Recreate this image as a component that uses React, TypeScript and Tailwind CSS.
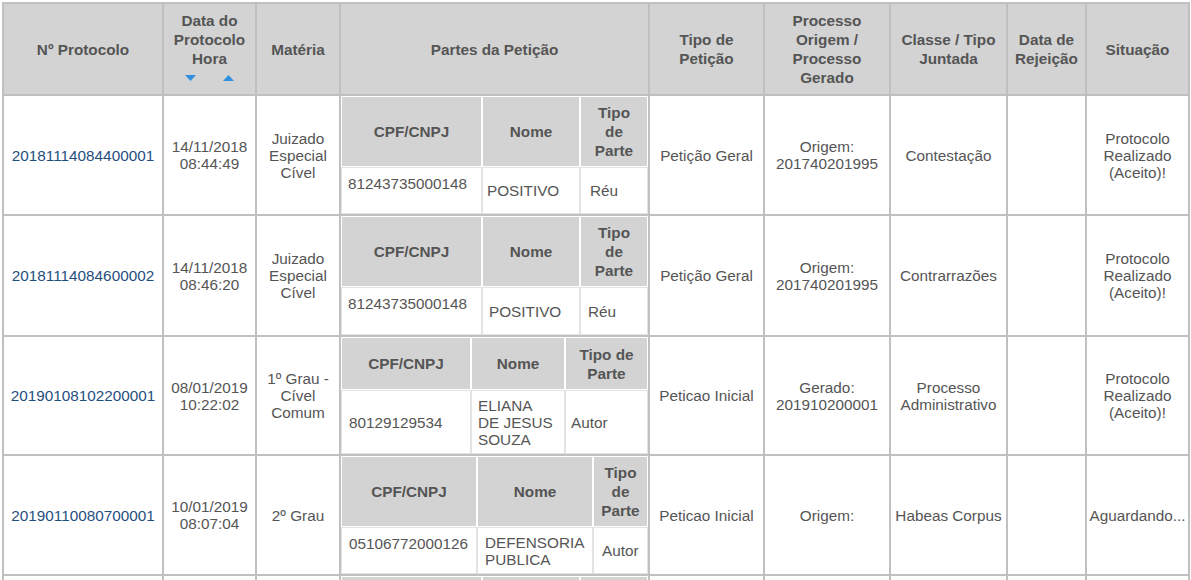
import React from "react";

const CELL =
  "flex items-center justify-center text-center border-r-2 border-b-2 border-[#c0c0c0] whitespace-nowrap";
const HEAD = CELL + " bg-[#d3d3d3] font-bold leading-[19px] text-[#555555]";
const BODY = CELL + " bg-white leading-[17px] text-[#555555]";

const NTH =
  "flex items-center justify-center text-center font-bold leading-[19px] bg-[#d3d3d3] border border-white text-[#555555] whitespace-nowrap";
const NTD =
  "flex bg-white border border-[#e3e3e3] leading-[17px] text-[#555555] whitespace-nowrap";

function Lines({ lines }: { lines: string[] }) {
  return (
    <div>
      {lines.map((l, i) => (
        <div key={i}>{l === "" ? "\u00a0" : l}</div>
      ))}
    </div>
  );
}

type Nested = {
  grid: string;
  tipoHead: string[];
  heads?: boolean;
  cpf?: string;
  cpfTop?: boolean;
  nome?: string[];
  tipo?: string;
  pads?: [string, string, string];
};

type Row = {
  proto: string;
  date: string[];
  materia: string[];
  nested: Nested;
  tipoPet: string[];
  proc: string[];
  classe: string[];
  sit: string[];
};

const rows: Row[] = [
  {
    proto: "20181114084400001",
    date: ["14/11/2018", "08:44:49"],
    materia: ["Juizado", "Especial", "Cível"],
    nested: {
      grid: "grid-cols-[141px_98px_68px] grid-rows-[71px_47px]",
      tipoHead: ["Tipo", "de", "Parte"],
      cpf: "81243735000148",
      cpfTop: true,
      nome: ["POSITIVO"],
      tipo: "Réu",
      pads: ["pl-[6px]", "pl-[4px]", "pl-[9px]"],
    },
    tipoPet: ["Petição Geral"],
    proc: ["Origem:", "201740201995"],
    classe: ["Contestação"],
    sit: ["Protocolo", "Realizado", "(Aceito)!"],
  },
  {
    proto: "20181114084600002",
    date: ["14/11/2018", "08:46:20"],
    materia: ["Juizado", "Especial", "Cível"],
    nested: {
      grid: "grid-cols-[141px_98px_68px] grid-rows-[71px_48px]",
      tipoHead: ["Tipo", "de", "Parte"],
      cpf: "81243735000148",
      cpfTop: true,
      nome: ["POSITIVO"],
      tipo: "Réu",
      pads: ["pl-[6px]", "pl-[6px]", "pl-[7px]"],
    },
    tipoPet: ["Petição Geral"],
    proc: ["Origem:", "201740201995"],
    classe: ["Contrarrazões"],
    sit: ["Protocolo", "Realizado", "(Aceito)!"],
  },
  {
    proto: "20190108102200001",
    date: ["08/01/2019", "10:22:02"],
    materia: ["1º Grau -", "Cível", "Comum"],
    nested: {
      grid: "grid-cols-[130px_94px_83px] grid-rows-[53px_64px]",
      tipoHead: ["Tipo de", "Parte"],
      cpf: "80129129534",
      cpfTop: false,
      nome: ["ELIANA", "DE JESUS", "SOUZA"],
      tipo: "Autor",
      pads: ["pl-[7px]", "pl-[6px]", "pl-[5px]"],
    },
    tipoPet: ["Peticao Inicial"],
    proc: ["Gerado:", "201910200001"],
    classe: ["Processo", "Administrativo"],
    sit: ["Protocolo", "Realizado", "(Aceito)!"],
  },
  {
    proto: "20190110080700001",
    date: ["10/01/2019", "08:07:04"],
    materia: ["2º Grau"],
    nested: {
      grid: "grid-cols-[136px_116px_55px] grid-rows-[71px_47px]",
      tipoHead: ["Tipo", "de", "Parte"],
      cpf: "05106772000126",
      cpfTop: true,
      nome: ["DEFENSORIA", "PUBLICA"],
      tipo: "Autor",
      pads: ["pl-[7px]", "pl-[7px]", "pl-[8px]"],
    },
    tipoPet: ["Peticao Inicial"],
    proc: ["Origem:"],
    classe: ["Habeas Corpus"],
    sit: ["Aguardando..."],
  },
];

function Partes({ n }: { n: Nested }) {
  const pads = n.pads ?? ["pl-[6px]", "pl-[6px]", "pl-[6px]"];
  const showHeads = n.heads !== false;
  return (
    <div className={"grid h-full " + n.grid}>
      <div className={NTH}>{showHeads ? "CPF/CNPJ" : ""}</div>
      <div className={NTH}>{showHeads ? "Nome" : ""}</div>
      <div className={NTH}>{showHeads ? <Lines lines={n.tipoHead} /> : null}</div>
      <div
        className={
          NTD +
          " " +
          pads[0] +
          (n.cpfTop ? " items-start pt-[7px]" : " items-center")
        }
      >
        {n.cpf ?? ""}
      </div>
      <div className={NTD + " items-center " + pads[1]}>
        {n.nome ? <Lines lines={n.nome} /> : null}
      </div>
      <div className={NTD + " items-center " + pads[2]}>{n.tipo ?? ""}</div>
    </div>
  );
}

function SortArrows() {
  return (
    <div className="flex items-center justify-center gap-[27px] h-[19px]">
      <svg width="11" height="6" viewBox="0 0 11 6">
        <polygon points="0,0 11,0 5.5,6" fill="#2f8fe0" />
      </svg>
      <svg width="11" height="6" viewBox="0 0 11 6">
        <polygon points="0,6 11,6 5.5,0" fill="#2f8fe0" />
      </svg>
    </div>
  );
}

export default function App() {
  return (
    <div className="w-[1191px] h-[580px] overflow-hidden bg-white pt-[2px] pl-[2px] font-['Liberation_Sans',Arial,Helvetica,sans-serif] text-[15.3px]">
      <div className="grid grid-cols-[160px_93px_84px_309px_115px_126px_117px_79px_103px] grid-rows-[92px_120px_121px_119px_120px_120px] w-[1188px] border-l-2 border-t-2 border-[#c0c0c0]">
        {/* Header */}
        <div className={HEAD}>Nº Protocolo</div>
        <div className={HEAD}>
          <div>
            <div>Data do</div>
            <div>Protocolo</div>
            <div>Hora</div>
            <SortArrows />
          </div>
        </div>
        <div className={HEAD}>Matéria</div>
        <div className={HEAD}>Partes da Petição</div>
        <div className={HEAD}>
          <Lines lines={["Tipo de", "Petição"]} />
        </div>
        <div className={HEAD}>
          <Lines lines={["Processo", "Origem /", "Processo", "Gerado"]} />
        </div>
        <div className={HEAD}>
          <Lines lines={["Classe / Tipo", "Juntada"]} />
        </div>
        <div className={HEAD}>
          <Lines lines={["Data de", "Rejeição"]} />
        </div>
        <div className={HEAD}>Situação</div>

        {rows.map((r) => (
          <React.Fragment key={r.proto}>
            <div className={BODY}>
              <span className="text-[#1f4f7f]">{r.proto}</span>
            </div>
            <div className={BODY}>
              <Lines lines={r.date} />
            </div>
            <div className={BODY}>
              <Lines lines={r.materia} />
            </div>
            <div className="border-r-2 border-b-2 border-[#c0c0c0] bg-white">
              <Partes n={r.nested} />
            </div>
            <div className={BODY}>
              <Lines lines={r.tipoPet} />
            </div>
            <div className={BODY}>
              <Lines lines={r.proc} />
            </div>
            <div className={BODY}>
              <Lines lines={r.classe} />
            </div>
            <div className={BODY}></div>
            <div className={BODY}>
              <Lines lines={r.sit} />
            </div>
          </React.Fragment>
        ))}

        {/* Next row (mostly below the visible area) */}
        <div className={BODY}></div>
        <div className={BODY}></div>
        <div className={BODY}></div>
        <div className="border-r-2 border-b-2 border-[#c0c0c0] bg-white">
          <Partes
            n={{
              grid: "grid-cols-[141px_98px_68px] grid-rows-[71px_47px]",
              tipoHead: ["Tipo", "de", "Parte"],
              heads: false,
            }}
          />
        </div>
        <div className={BODY}></div>
        <div className={BODY}></div>
        <div className={BODY}></div>
        <div className={BODY}></div>
        <div className={BODY}></div>
      </div>
    </div>
  );
}
